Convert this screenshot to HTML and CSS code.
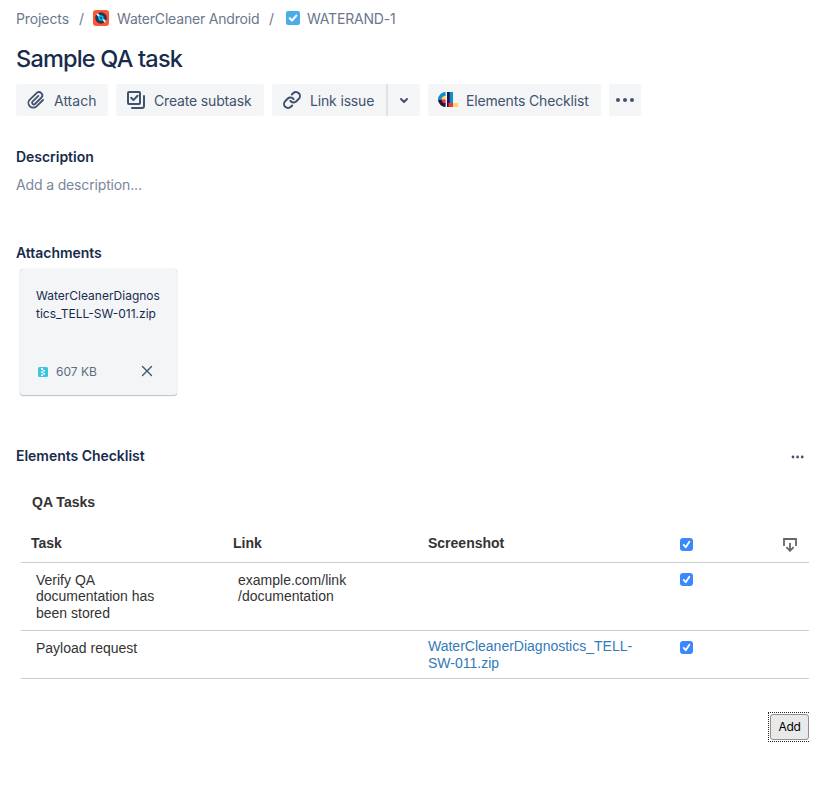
FILE: index.html
```html
<!DOCTYPE html>
<html lang="en">
<head>
<meta charset="utf-8">
<title>Sample QA task</title>
<link rel="stylesheet" href="styles.css">
</head>
<body>
<main class="issue">
  <nav class="crumbs">
    <span class="crumb crumb-projects">Projects</span>
    <span class="sep">/</span>
    <svg class="avatar" viewBox="0 0 16 16"><rect width="16" height="16" rx="3" fill="#ff5630"/><circle cx="8" cy="8" r="5.8" fill="#253858"/><path d="M3.3 4.5 4.7 3l3 3.300-1.300 1.400zM9.400 10l1.300-1.400 2.400 2.600-1.400 1.500z" fill="#deebff"/><circle cx="8" cy="8" r="2" fill="#0747a6" stroke="#00c7e6" stroke-width="1.400"/></svg>
    <span class="crumb crumb-name">WaterCleaner Android</span>
    <span class="sep">/</span>
    <svg class="type" viewBox="0 0 14 14"><rect width="14" height="14" rx="2" fill="#4bade8"/><path d="M3.700 7.300 6 9.500l4.300-4.900" fill="none" stroke="#fff" stroke-width="2" stroke-linecap="round" stroke-linejoin="round"/></svg>
    <span class="crumb crumb-key">WATERAND-1</span>
  </nav>

  <h1>Sample QA task</h1>

  <div class="actions">
    <button class="btn attach"><svg viewBox="0 0 24 24"><path d="M19 12 12.500 18.300a4.700 4.700 0 0 1-6.700-6.600L12.800 4.900a3.300 3.300 0 0 1 4.700 4.600L10.900 16a1.700 1.700 0 0 1-2.400-2.400l5.900-5.700"/></svg><span>Attach</span></button>
    <button class="btn subtask"><svg viewBox="0 0 24 24"><rect x="4" y="4" width="12" height="12" rx="1"/><path d="m7.200 9.800 2.200 2.300 4.200-4.300M20 8v10a2 2 0 0 1-2 2H8"/></svg><span>Create subtask</span></button>
    <div class="split">
      <button class="btn link"><svg viewBox="0 0 24 24"><path transform="translate(2.400 2.400) scale(.8)" d="M10 13a5 5 0 0 0 7.540.540l3-3a5 5 0 0 0-7.070-7.070l-1.720 1.710M14 11a5 5 0 0 0-7.540-.540l-3 3a5 5 0 0 0 7.070 7.070l1.710-1.710"/></svg><span>Link issue</span></button>
      <button class="btn drop" aria-label="More link options"><svg viewBox="0 0 24 24"><path d="m9 11 3 3 3-3"/></svg></button>
    </div>
    <button class="btn elements"><svg class="logo" viewBox="0 0 20 16"><path d="M7.600 0A7.600 7.600 0 0 0 0 7.500h4A3.600 3.600 0 0 1 7.600 4z" fill="#0f8fd3"/><path d="M0 7.500A7.600 7.600 0 0 0 7.600 15v-4A3.600 3.600 0 0 1 4 7.500z" fill="#20163f"/><path d="M3.500 7.500A4 4 0 0 1 7.600 4v3.500z" fill="#ffd45c"/><path d="M3.500 7.500h4.100v4a4 4 0 0 1-4.100-4z" fill="#f0304a"/><path d="M9 0h3v15H9z" fill="#20163f"/><path d="M11.700 0H15v11h-3.300z" fill="#0f8fd3"/><path d="M10.500 11H15v4h-4.500z" fill="#ef3340"/><path d="M15 11h5v4h-5z" fill="#ffd45c"/></svg><span>Elements Checklist</span></button>
    <button class="btn more" aria-label="More"><svg viewBox="0 0 20 24"><g class="dots"><circle cx="3" cy="12" r="2"/><circle cx="10" cy="12" r="2"/><circle cx="17" cy="12" r="2"/></g></svg></button>
  </div>

  <section class="description">
    <h2>Description</h2>
    <p>Add a description...</p>
  </section>

  <section class="attachments">
    <h2>Attachments</h2>
    <div class="card">
      <div class="file">WaterCleanerDiagnos<br>tics_TELL-SW-011.zip</div>
      <div class="meta">
        <svg class="zip" viewBox="0 0 10 10"><rect width="10" height="10" rx="1.500" fill="#3cc6de"/><path d="M3 1h2v2H3zM5 3h2v1.500H5zM3 4.500h2V6H3zM5 6h2v1.500H5zM3 7.500h2V9H3z" fill="#fff"/></svg>
        <span>607 KB</span>
        <svg class="close" viewBox="0 0 12 12"><path d="m1.500 1.500 9 9m0-9-9 9"/></svg>
      </div>
    </div>
  </section>

  <section class="checklist">
    <header class="panel-head">
      <h2>Elements Checklist</h2>
      <svg viewBox="0 0 14 4"><circle cx="2" cy="2" r="1.400"/><circle cx="6.600" cy="2" r="1.400"/><circle cx="11.200" cy="2" r="1.400"/></svg>
    </header>
    <h3>QA Tasks</h3>
    <div class="table">
      <div class="row head">
        <span>Task</span><span>Link</span><span>Screenshot</span>
        <svg class="check" viewBox="0 0 13 13"><rect width="13" height="13" rx="3"/><path d="m3.700 6.900 2 2.300 3.700-5.500"/></svg>
        <svg class="export" viewBox="0 0 14 14"><path d="M1 8V1h12v7M7 5v8M3.400 9.200 7 12.800l3.600-3.600"/></svg>
      </div>
      <div class="row first">
        <span class="inset">Verify QA<br>documentation has<br>been stored</span><span class="inset">example.com/link<br>/documentation</span><span></span>
        <svg class="check" viewBox="0 0 13 13"><rect width="13" height="13" rx="3"/><path d="m3.700 6.900 2 2.300 3.700-5.500"/></svg>
      </div>
      <div class="row second">
        <span class="inset payload">Payload request</span><span></span><a>WaterCleanerDiagnostics_TELL-<br>SW-011.zip</a>
        <svg class="check" viewBox="0 0 13 13"><rect width="13" height="13" rx="3"/><path d="m3.700 6.900 2 2.300 3.700-5.500"/></svg>
      </div>
    </div>
    <div class="footer"><div class="focus"><button class="add">Add</button></div></div>
  </section>
</main>
</body>
</html>
```
FILE: styles.css
```css
* { box-sizing: border-box; }
body { margin: 0; background: #fff; color: #172b4d; font: 14px/20px Inter, sans-serif; }
h1, h2, h3, p { margin: 0; }
svg { display: block; flex: none; }
button { font: inherit; margin: 0; border: 0; }
.issue { padding: 9px 16px 0; }

.crumbs { display: flex; align-items: center; height: 20px; color: #6b778c; white-space: nowrap; letter-spacing: -0.19px; }
.crumb-projects { width: 53px; letter-spacing: -0.1px; }
.crumb-name { width: 143px; }
.sep { width: 24px; padding-left: 10px; }
.avatar { width: 16px; height: 16px; margin-right: 8px; position: relative; top: -1px; }
.crumb-name + .sep { width: 26px; padding-left: 9px; }
.type { width: 14px; height: 14px; margin-right: 7px; position: relative; top: -1px; }

h1 { margin-top: 16px; font-size: 23.5px; line-height: 28px; font-weight: 500; letter-spacing: -0.8px; }

.actions { display: flex; gap: 8px; margin-top: 11px; height: 32px; }
.btn { display: flex; align-items: center; height: 32px; padding: 0 0 0 8px; border-radius: 3px; background: #f4f5f7; color: #42526e; white-space: nowrap; letter-spacing: -0.16px; }
.btn span { padding-top: 2px; }
.btn svg { width: 24px; height: 24px; fill: none; stroke: #42526e; stroke-width: 2; stroke-linecap: round; stroke-linejoin: round; }
.btn .dots { fill: #42526e; stroke: none; }
.attach { width: 92px; gap: 6px; letter-spacing: 0; }
.btn.attach svg { stroke-width: 1.8; }
.subtask { width: 148px; gap: 6px; }
.split { display: flex; }
.link { width: 114px; gap: 6px; border-radius: 3px 0 0 3px; }
.btn.link svg { stroke-width: 2.5; }
.btn.drop { width: 34px; padding-left: 4px; border-left: 2px solid #dfe1e6; border-radius: 0 3px 3px 0; }
.elements { width: 173px; gap: 8px; padding-left: 10px; }
.btn .logo { width: 20px; height: 16px; stroke: none; }
.btn.more { width: 32px; padding-left: 6px; }
.btn.more svg { width: 20px; }

h2 { font-size: 14px; line-height: 20px; font-weight: 600; letter-spacing: -0.03px; }
.description { margin-top: 31px; }
.description p { margin-top: 8px; color: #7a869a; letter-spacing: -0.15px; }
.attachments { margin-top: 48px; }
.card { width: 157px; height: 126px; margin: 6px 0 0 3.5px; padding: 18px 16px 0 16.5px; border-radius: 3px; background: #f4f5f7; box-shadow: 0 1px 1px rgba(9,30,66,.25), 0 0 1px rgba(9,30,66,.31); font-size: 12px; line-height: 18px; }
.file { white-space: nowrap; }
.meta { display: flex; align-items: center; margin-top: 40px; padding-left: 2px; color: #5e6c84; }
.zip { width: 10px; height: 10px; margin-right: 8px; }
.close { width: 12px; height: 12px; margin: -2px 7.5px 0 auto; stroke: #42526e; stroke-width: 1.4; stroke-linecap: round; }

.checklist { margin-top: 51px; }
.panel-head { display: flex; align-items: center; justify-content: space-between; padding-right: 16px; }
.panel-head svg { width: 14px; height: 4px; fill: #42526e; margin-top: 2px; }
h3, .table { color: #333; font: 14px/16.5px "Liberation Sans", sans-serif; }
h3 { margin: 28px 0 0 16px; font-weight: 700; }
.table { margin: 16px 12px 0 5px; }
.row { display: grid; grid-template-columns: 202px 195px 252px 103px auto; padding-left: 10px; border-bottom: 1px solid #ccc; white-space: nowrap; }
.head { height: 36px; padding-top: 8px; font-weight: 700; }
.first { height: 68px; padding-top: 9px; }
.second { height: 48px; padding-top: 7px; }
.inset { padding-left: 5px; }
.payload { padding-top: 2px; }
.row a { color: #337ab7; line-height: 17px; }
.check { width: 13px; height: 13px; fill: #3b87fd; margin-top: 3px; }
.first .check { margin-top: 1px; }
.check path { fill: none; stroke: #fff; stroke-width: 1.8; stroke-linecap: round; stroke-linejoin: round; }
.export { width: 14px; height: 14px; margin-top: 3px; fill: none; stroke: #666; stroke-width: 1.8; }
.footer { display: flex; justify-content: flex-end; margin: 33px 12px 0 0; }
.focus { width: 41px; height: 30px; border: 1px dotted #222; border-right: 0; padding: 1px 0 1px 1px; }
.add { width: 39px; height: 26px; padding: 0; border: 1px solid #8f8f8f; border-radius: 3px; background: #e9e9e9; color: #000; font-size: 12px; letter-spacing: -0.4px; }
```
